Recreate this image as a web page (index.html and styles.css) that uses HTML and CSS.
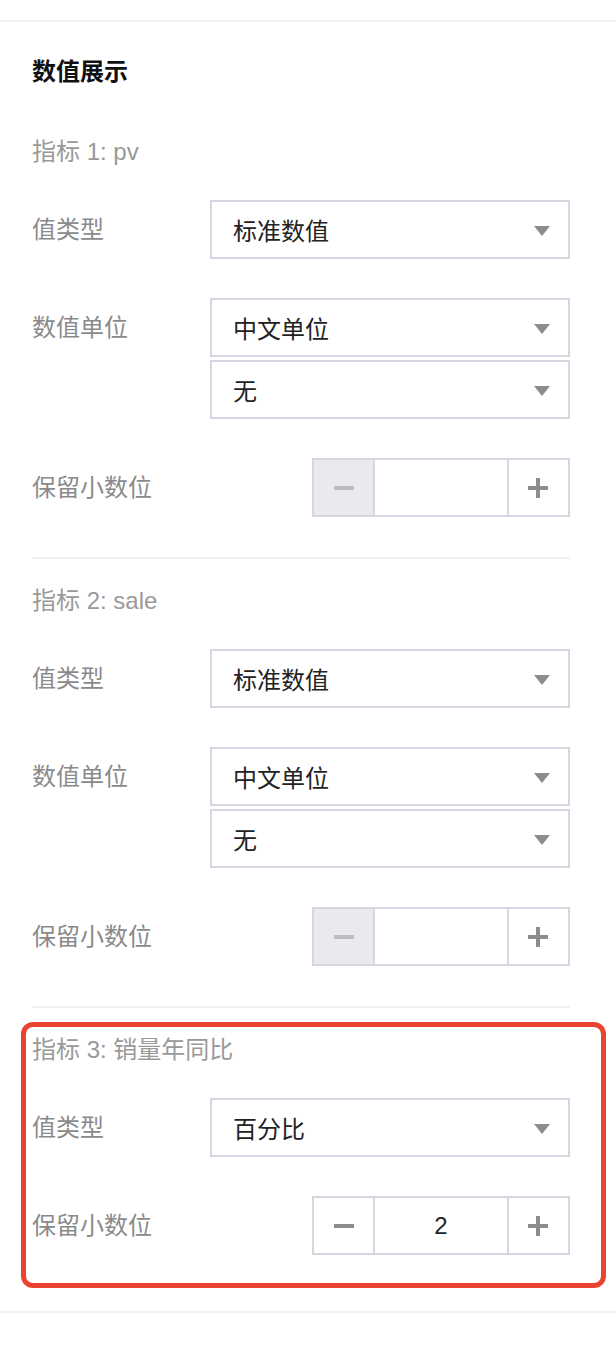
FILE: index.html
```html
<!DOCTYPE html>
<html lang="zh-CN">
<head>
<meta charset="utf-8">
<title>数值展示</title>
<link rel="stylesheet" href="styles.css">
</head>
<body>
<div class="page">
  <div class="panel">
    <h2 class="title">数值展示</h2>

    <section class="section first">
      <div class="section-head">指标 1: pv</div>
      <div class="row">
        <div class="row-label">值类型</div>
        <div class="row-controls">
          <div class="select"><span>标准数值</span><i class="caret"></i></div>
        </div>
      </div>
      <div class="row">
        <div class="row-label">数值单位</div>
        <div class="row-controls">
          <div class="select"><span>中文单位</span><i class="caret"></i></div>
          <div class="select"><span>无</span><i class="caret"></i></div>
        </div>
      </div>
      <div class="row">
        <div class="row-label">保留小数位</div>
        <div class="row-controls">
          <div class="stepper">
            <div class="step minus disabled"><i class="bar-h"></i></div>
            <div class="step-value"></div>
            <div class="step plus"><i class="bar-h"></i><i class="bar-v"></i></div>
          </div>
        </div>
      </div>
    </section>

    <section class="section">
      <div class="section-head">指标 2: sale</div>
      <div class="row">
        <div class="row-label">值类型</div>
        <div class="row-controls">
          <div class="select"><span>标准数值</span><i class="caret"></i></div>
        </div>
      </div>
      <div class="row">
        <div class="row-label">数值单位</div>
        <div class="row-controls">
          <div class="select"><span>中文单位</span><i class="caret"></i></div>
          <div class="select"><span>无</span><i class="caret"></i></div>
        </div>
      </div>
      <div class="row">
        <div class="row-label">保留小数位</div>
        <div class="row-controls">
          <div class="stepper">
            <div class="step minus disabled"><i class="bar-h"></i></div>
            <div class="step-value"></div>
            <div class="step plus"><i class="bar-h"></i><i class="bar-v"></i></div>
          </div>
        </div>
      </div>
    </section>

    <section class="section last">
      <div class="section-head">指标 3: 销量年同比</div>
      <div class="row">
        <div class="row-label">值类型</div>
        <div class="row-controls">
          <div class="select"><span>百分比</span><i class="caret"></i></div>
        </div>
      </div>
      <div class="row">
        <div class="row-label">保留小数位</div>
        <div class="row-controls">
          <div class="stepper">
            <div class="step minus"><i class="bar-h"></i></div>
            <div class="step-value">2</div>
            <div class="step plus"><i class="bar-h"></i><i class="bar-v"></i></div>
          </div>
        </div>
      </div>
    </section>
  </div>
  <div class="highlight"></div>
</div>
</body>
</html>
```

FILE: styles.css
```css
* {
  box-sizing: border-box;
}

html, body {
  margin: 0;
  padding: 0;
  background: #ffffff;
}

body {
  font-family: "Liberation Sans", "Noto Sans CJK SC", sans-serif;
  font-size: 24px;
  color: #222222;
}

.page {
  position: relative;
  width: 616px;
  height: 1348px;
  padding-top: 20px;
}

.panel {
  border-top: 2px solid #f2f2f3;
  border-bottom: 2px solid #f2f2f3;
  padding: 32px 46px 56px 32px;
}

.title {
  margin: 0;
  font-size: 24px;
  font-weight: 700;
  line-height: 36px;
  color: #111111;
}

.section {
  border-top: 2px solid #f0f0f1;
  margin-top: 40px;
  padding-top: 24px;
}

.section.first {
  border-top: 0;
  margin-top: 44px;
  padding-top: 0;
}

.section-head {
  line-height: 36px;
  color: #999999;
}

.row {
  display: flex;
  margin-top: 39px;
}

.section-head + .row {
  margin-top: 30px;
}

.row-label {
  width: 178px;
  flex: none;
  line-height: 59px;
  color: #8a8a8a;
}

.row-controls {
  width: 360px;
  display: flex;
  flex-direction: column;
  align-items: flex-end;
  gap: 3px;
}

.select {
  width: 360px;
  height: 59px;
  border: 2px solid #d4d7df;
  display: flex;
  align-items: center;
  justify-content: space-between;
  padding: 0 18px 0 21px;
  color: #222222;
  background: #ffffff;
}

.caret {
  width: 0;
  height: 0;
  border-left: 8px solid transparent;
  border-right: 8px solid transparent;
  border-top: 10px solid #8c8c8c;
  margin-top: 2px;
}

.stepper {
  width: 258px;
  height: 59px;
  border: 2px solid #d4d7df;
  display: flex;
}

.step {
  width: 61px;
  flex: none;
  position: relative;
  background: #ffffff;
}

.step.minus {
  border-right: 2px solid #d4d7df;
}

.step.plus {
  border-left: 2px solid #d4d7df;
}

.step.disabled {
  background: #e9eaee;
}

.bar-h,
.bar-v {
  position: absolute;
  background: #8c8c8c;
}

.bar-h {
  width: 20px;
  height: 4px;
  left: 50%;
  top: 50%;
  margin: -2px 0 0 -10px;
}

.bar-v {
  width: 4px;
  height: 20px;
  left: 50%;
  top: 50%;
  margin: -10px 0 0 -2px;
}

.step.plus .bar-h {
  margin-left: -11px;
}

.step.plus .bar-v {
  margin-left: -3px;
}

.step.disabled .bar-h {
  background: #bdbdbd;
}

.step-value {
  flex: 1;
  display: flex;
  align-items: center;
  justify-content: center;
  color: #222222;
}

.highlight {
  position: absolute;
  left: 21px;
  top: 1022px;
  width: 585px;
  height: 266px;
  border: 5px solid #e9442f;
  border-radius: 12px;
  pointer-events: none;
}
```
